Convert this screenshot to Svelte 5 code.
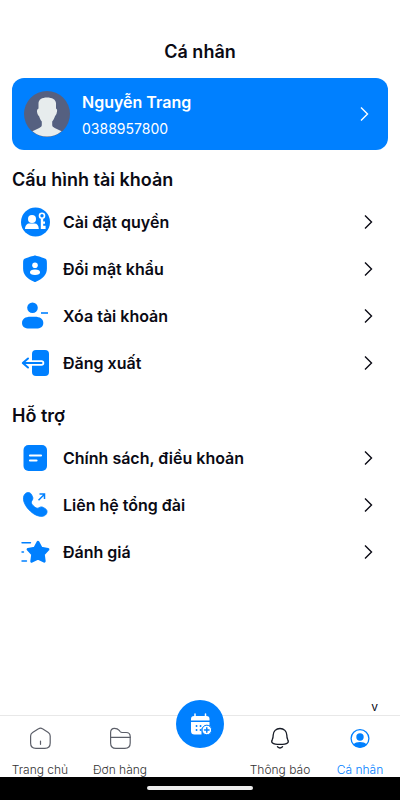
<script lang="ts">
  type Item = { id: string; label: string };

  const groups: { title: string; items: Item[] }[] = [
    {
      title: 'Cấu hình tài khoản',
      items: [
        { id: 'permission', label: 'Cài đặt quyền' },
        { id: 'password', label: 'Đổi mật khẩu' },
        { id: 'remove', label: 'Xóa tài khoản' },
        { id: 'logout', label: 'Đăng xuất' },
      ],
    },
    {
      title: 'Hỗ trợ',
      items: [
        { id: 'policy', label: 'Chính sách, điều khoản' },
        { id: 'hotline', label: 'Liên hệ tổng đài' },
        { id: 'rating', label: 'Đánh giá' },
      ],
    },
  ];

  const tabs: Item[] = [
    { id: 'home', label: 'Trang chủ' },
    { id: 'orders', label: 'Đơn hàng' },
    { id: 'create', label: '' },
    { id: 'notices', label: 'Thông báo' },
    { id: 'profile', label: 'Cá nhân' },
  ];

  let active = $state('profile');
</script>

{#snippet chevron()}
  <svg width="10" height="16" viewBox="0 0 10 16" aria-hidden="true">
    <path d="M1 1.500 7.500 8 1 14.500" fill="none" stroke="currentColor" stroke-width="1.400" />
  </svg>
{/snippet}

{#snippet menuIcon(id: string)}
  <svg class="menu-icon" width="30" height="30" viewBox="0 0 30 30" fill="currentColor" aria-hidden="true">
    {#if id === 'permission'}
      <circle cx="15.500" cy="15" r="14.500" />
      <g fill="#fff">
        <circle cx="12" cy="12" r="4" />
        <path d="M5 22c0-3.600 2-5.600 4.500-5.600h5c2.600 0 4.300 2 4.300 5.600z" />
        <path d="M20.800 11.500h2.400v3h1.800v2.300h-1.800v2h2.400v3.200h-4.800z" />
      </g>
      <circle cx="22" cy="8.700" r="2.500" fill="none" stroke="#fff" stroke-width="1.600" />
    {:else if id === 'password'}
      <path d="M15 1.500c.5 0 9.600 2.600 10.500 3.200.9.600 1.400 1.300 1.400 4.300v5.500c0 6-3.800 10-11 13.300q-.9.400-1.800 0c-7.200-3.300-11-7.300-11-13.300V9c0-3 .5-3.700 1.400-4.300C5.400 4.100 14.500 1.500 15 1.500z" />
      <circle cx="15" cy="11.200" r="2.800" fill="#fff" />
      <ellipse cx="15" cy="18.300" rx="5" ry="2.700" fill="#fff" />
    {:else if id === 'remove'}
      <circle cx="12.500" cy="6.700" r="5.300" />
      <path d="M2 22c0-4.200 3.400-6.200 8.500-6.200h4.300c5 0 8.500 2 8.500 6.200 0 3.900-3 5.600-7 5.600H9c-4 0-7-1.700-7-5.600z" />
      <path d="M21 12h7" stroke="currentColor" stroke-width="1.600" />
    {:else if id === 'logout'}
      <rect x="12" y="2" width="17" height="26" rx="4" />
      <path d="M8 15h13.500" stroke="#fff" stroke-width="5.500" stroke-linecap="round" />
      <path d="M21.500 15H3m5-4.500L2.800 15 8 19.500" fill="none" stroke="currentColor" stroke-width="2" stroke-linecap="round" stroke-linejoin="round" />
    {:else if id === 'policy'}
      <rect x="3.500" y="2" width="23.500" height="26" rx="5" />
      <path d="M10 12.500h11M10 17.500h6.500" stroke="#fff" stroke-width="2.200" stroke-linecap="round" />
    {:else if id === 'hotline'}
      <path d="M4.800 4.200C6.500 1.900 9.900 2 11.300 4.200l1.200 2.400c.8 1.600.3 3-.7 4.300-1 1.400-.5 2.800 1.200 4.600l1.800 1.600c1.600 1.300 2.800 1.500 4.200.6 1.300-.9 2.800-1.100 4.200-.3l2.200 1.300c2.200 1.500 2.200 4.300.1 6.300-2.700 2.300-7.200 1.700-12-1.300-4.200-2.800-8-7.200-9.500-11.700-.9-3.100-.8-5.800.8-7.800z" stroke="currentColor" stroke-width=".8" />
      <path d="M18.500 10.300 24.500 4.300M19.500 4h5v5" fill="none" stroke="currentColor" stroke-width="1.500" />
    {:else}
      <path d="m18 5.200 3.200 6 6.800 1.200-4.600 5 .9 6.900L18 21.200l-6.300 3.100.9-6.900-4.600-5 6.800-1.200z" stroke="currentColor" stroke-width="2.800" stroke-linejoin="round" />
      <path d="M2 5.700h8.500M2 15h1.500M2 24h4.500" stroke="currentColor" stroke-width="1.400" stroke-linecap="round" />
    {/if}
  </svg>
{/snippet}

{#snippet tabIcon(id: string)}
  <svg width="24" height="24" viewBox="0 0 24 24" fill="none" stroke="#5c5f69" stroke-width="1.200" stroke-linejoin="round" stroke-linecap="round" aria-hidden="true">
    {#if id === 'home'}
      <path d="M10.500 2.800q2-1.400 4 0l5.800 3.700Q22.200 7.800 22.200 10v7c0 3.500-1.800 5.300-5.300 5.300H7.900c-3.500 0-5.300-1.800-5.300-5.300v-7q0-2.200 2-3.500z" />
      <path d="M12.500 15v3.300" />
    {:else if id === 'orders'}
      <path d="M2.600 6.500C2.600 3.800 4 2.300 6.500 2.300c2.700 0 3.500.6 4.700 2l.9 1.200q.8 1 2 1h4.100q4 0 4 4v6.500c0 3.500-1.800 5.300-5.300 5.300h-9c-3.500 0-5.300-1.800-5.300-5.300z" />
      <path d="M2.600 11.300h19.600" />
    {:else if id === 'notices'}
      <path d="M12 2.500c4 0 6.800 2.800 6.800 6.600 0 2.400.2 3 .9 4.500.8 1.500.8 2.700-.2 3.400-1.300 1-4 1.400-7.500 1.400s-6.200-.4-7.500-1.400c-1-.7-1-1.900-.2-3.400.7-1.500.9-2.100.9-4.500C5.200 5.300 8 2.500 12 2.500z" stroke="#171b26" stroke-width="1.300" />
      <path d="M9.500 20.800q2.500 2.200 5 0" stroke="#171b26" stroke-width="1.400" />
    {:else}
      <circle cx="12" cy="12.500" r="8.900" stroke="#0080ff" stroke-width="1.300" />
      <circle cx="12" cy="11" r="3.700" fill="#0080ff" stroke="none" />
      <path d="M5.500 18.500c2.500-3.200 10.500-3.200 13 0-3 4-10 4-13 0z" fill="#0080ff" stroke="none" />
    {/if}
  </svg>
{/snippet}

<div class="screen">
  <header>
    <h1>Cá nhân</h1>
  </header>

  <main>
    <button class="card">
      <svg width="46" height="46" viewBox="0 0 46 46" aria-hidden="true">
        <circle cx="23" cy="23" r="23" fill="#556080" />
        <path d="M14.500 12.500C14.500 8.500 18 6.500 23 6.500s9 2 9 6v5q1.500.7 1 3-.3 3.500-2 4.800c-.7 2.300-1.700 4-2.800 5.200v3.500c0 1.500 1 2.200 2.500 2.900l6.900 3.300A23 23 0 0 1 8.400 40.200l6.900-3.300c1.500-.7 2.500-1.400 2.500-2.900v-3.500c-1.100-1.200-2-2.900-2.700-5.200-1.500-1.300-1.900-3-2.100-4.800q-.3-2.300 1.500-3z" fill="#e7eced" />
      </svg>
      <span class="info">
        <strong>Nguyễn Trang</strong>
        <span>0388957800</span>
      </span>
      {@render chevron()}
    </button>

    {#each groups as group}
      <section>
        <h2>{group.title}</h2>
        {#each group.items as item}
          <button class="row">
            {@render menuIcon(item.id)}
            <span>{item.label}</span>
            {@render chevron()}
          </button>
        {/each}
      </section>
    {/each}
  </main>

  <div class="version">v</div>

  <nav>
    {#each tabs as tab}
      {#if tab.id === 'create'}
        <button class="create" aria-label="Tạo đơn">
          <svg width="24" height="24" viewBox="0 0 24 24" aria-hidden="true">
            <path d="M7 2v4M17.500 2v4" stroke="#fff" stroke-width="1.500" stroke-linecap="round" />
            <path d="M3 8.500V7q0-3 3-3h12.500q3 0 3 3v1.500zM3 10h18.500v3.500h-5l-3 3v6H6.500Q3 22.500 3 19z" fill="#fff" />
            <path d="M8.500 14h.1M12.500 14h.1M8.500 18h.1M12.500 18h.1" stroke="#0080ff" stroke-width="1.800" stroke-linecap="round" />
            <circle cx="18.800" cy="18" r="4.800" fill="#fff" stroke="#0080ff" stroke-width="1" />
            <path d="M18.800 15.700v4.600M16.500 18h4.600" stroke="#0080ff" stroke-width="1.400" stroke-linecap="round" />
          </svg>
        </button>
      {:else}
        <button class="tab" class:active={active === tab.id} onclick={() => (active = tab.id)}>
          {@render tabIcon(tab.id)}
          <span>{tab.label}</span>
        </button>
      {/if}
    {/each}
  </nav>

  <footer>
    <div class="handle"></div>
  </footer>
</div>

<style>
  :global(body) {
    background: #fff;
  }

  .screen {
    display: flex;
    flex-direction: column;
    min-height: 100vh;
    color: #0a0a14;
    font-family: Inter, 'Noto Sans', sans-serif;
  }

  button {
    padding: 0;
    border: none;
    background: none;
    color: inherit;
    font: inherit;
    text-align: left;
    cursor: pointer;
  }

  header {
    padding: 40px 12px 14px;
  }

  h1 {
    margin: 0;
    font-size: 18px;
    font-weight: 600;
    line-height: 24px;
    text-align: center;
  }

  main {
    display: flex;
    flex: 1;
    flex-direction: column;
    gap: 12px;
    padding: 0 12px;
  }

  .card {
    display: flex;
    align-items: center;
    gap: 12px;
    padding: 11px 18px 11px 12px;
    border-radius: 12px;
    background: #0080ff;
    color: #fff;
  }

  .info {
    display: flex;
    flex: 1;
    flex-direction: column;
    gap: 4px;
    font-size: 14px;
    line-height: 20px;
  }

  .info strong {
    font-size: 16px;
    font-weight: 600;
    line-height: 26px;
  }

  section {
    display: flex;
    flex-direction: column;
  }

  h2 {
    margin: 0;
    font-size: 18px;
    font-weight: 600;
    line-height: 36px;
  }

  .row {
    display: flex;
    align-items: center;
    gap: 13px;
    height: 47px;
    padding: 0 14px 0 8px;
    font-size: 16px;
    font-weight: 600;
  }

  .row span {
    flex: 1;
  }

  .menu-icon {
    color: #0080ff;
  }

  .version {
    padding: 0 22px;
    font-size: 12px;
    line-height: 16px;
    text-align: right;
  }

  nav {
    display: grid;
    grid-template-columns: repeat(5, 1fr);
    border-top: 1px solid #e8e8e8;
  }

  .tab {
    display: flex;
    flex-direction: column;
    align-items: center;
    gap: 12px;
    padding-top: 10px;
    color: #333;
    font-size: 12px;
    font-weight: 300;
    line-height: 15px;
  }

  .tab.active {
    color: #0080ff;
  }

  .create {
    display: flex;
    align-items: center;
    justify-content: center;
    justify-self: center;
    width: 48px;
    height: 48px;
    margin-top: -16px;
    border-radius: 50%;
    background: #0080ff;
  }

  footer {
    display: flex;
    justify-content: center;
    padding: 9px 0 10px;
    background: #000;
  }

  .handle {
    width: 106px;
    height: 4px;
    border-radius: 2px;
    background: #eee;
  }
</style>
